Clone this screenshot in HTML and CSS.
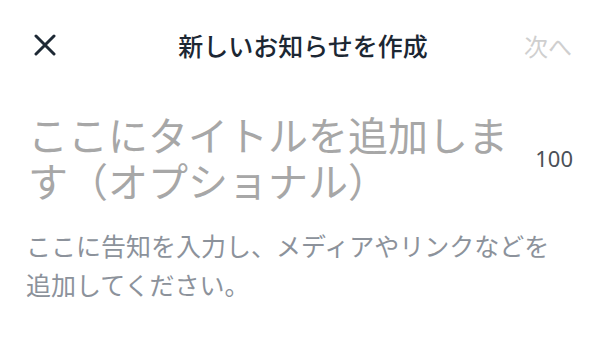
FILE: index.html
```html
<!DOCTYPE html>
<html lang="ja">
<head>
  <meta charset="UTF-8">
  <meta name="viewport" content="width=device-width, initial-scale=1.0">
  <title>新しいお知らせを作成</title>
  <link rel="stylesheet" href="styles.css">
</head>
<body>
  <div class="header">
    <button class="close" aria-label="閉じる">
      <svg width="22" height="22" viewBox="0 0 22 22">
        <path d="M2 2 L20 20 M20 2 L2 20" stroke="#1e2935" stroke-width="3" stroke-linecap="round" fill="none"/>
      </svg>
    </button>
    <div class="header-title">新しいお知らせを作成</div>
    <button class="next" disabled>次へ</button>
  </div>

  <div class="title-row">
    <div class="title-input">ここにタイトルを追加します（オプショナル）</div>
    <div class="counter">100</div>
  </div>

  <div class="body-input">ここに告知を入力し、メディアやリンクなどを追加してください。</div>
</body>
</html>
```

FILE: styles.css
```css
body {
  margin: 0;
  background-color: #fff;
  font-family: "Noto Sans CJK JP", "Noto Sans", sans-serif;
}

button {
  background: none;
  border: none;
  padding: 0;
  font-family: inherit;
  cursor: pointer;
}

.header {
  display: grid;
  grid-template-columns: 1fr auto 1fr;
  align-items: center;
  height: 90px;
  padding: 0 28px 0 34px;
}

.close {
  justify-self: start;
  display: flex;
}

.header-title {
  font-size: 25px;
  font-weight: 500;
  color: #1c2733;
}

.next {
  justify-self: end;
  font-size: 24px;
  color: #cfcfcf;
}

.title-row {
  display: flex;
  align-items: center;
  justify-content: space-between;
  padding: 21px 27px 0 28px;
}

.title-input {
  width: 490px;
  font-size: 40px;
  line-height: 46px;
  color: #a7a7a7;
}

.counter {
  font-family: "Noto Sans", sans-serif;
  font-size: 22px;
  color: #4b5057;
  padding-top: 1px;
}

.body-input {
  width: 540px;
  padding: 23px 0 0 26px;
  font-size: 25px;
  line-height: 39px;
  color: #8c929b;
}
```
